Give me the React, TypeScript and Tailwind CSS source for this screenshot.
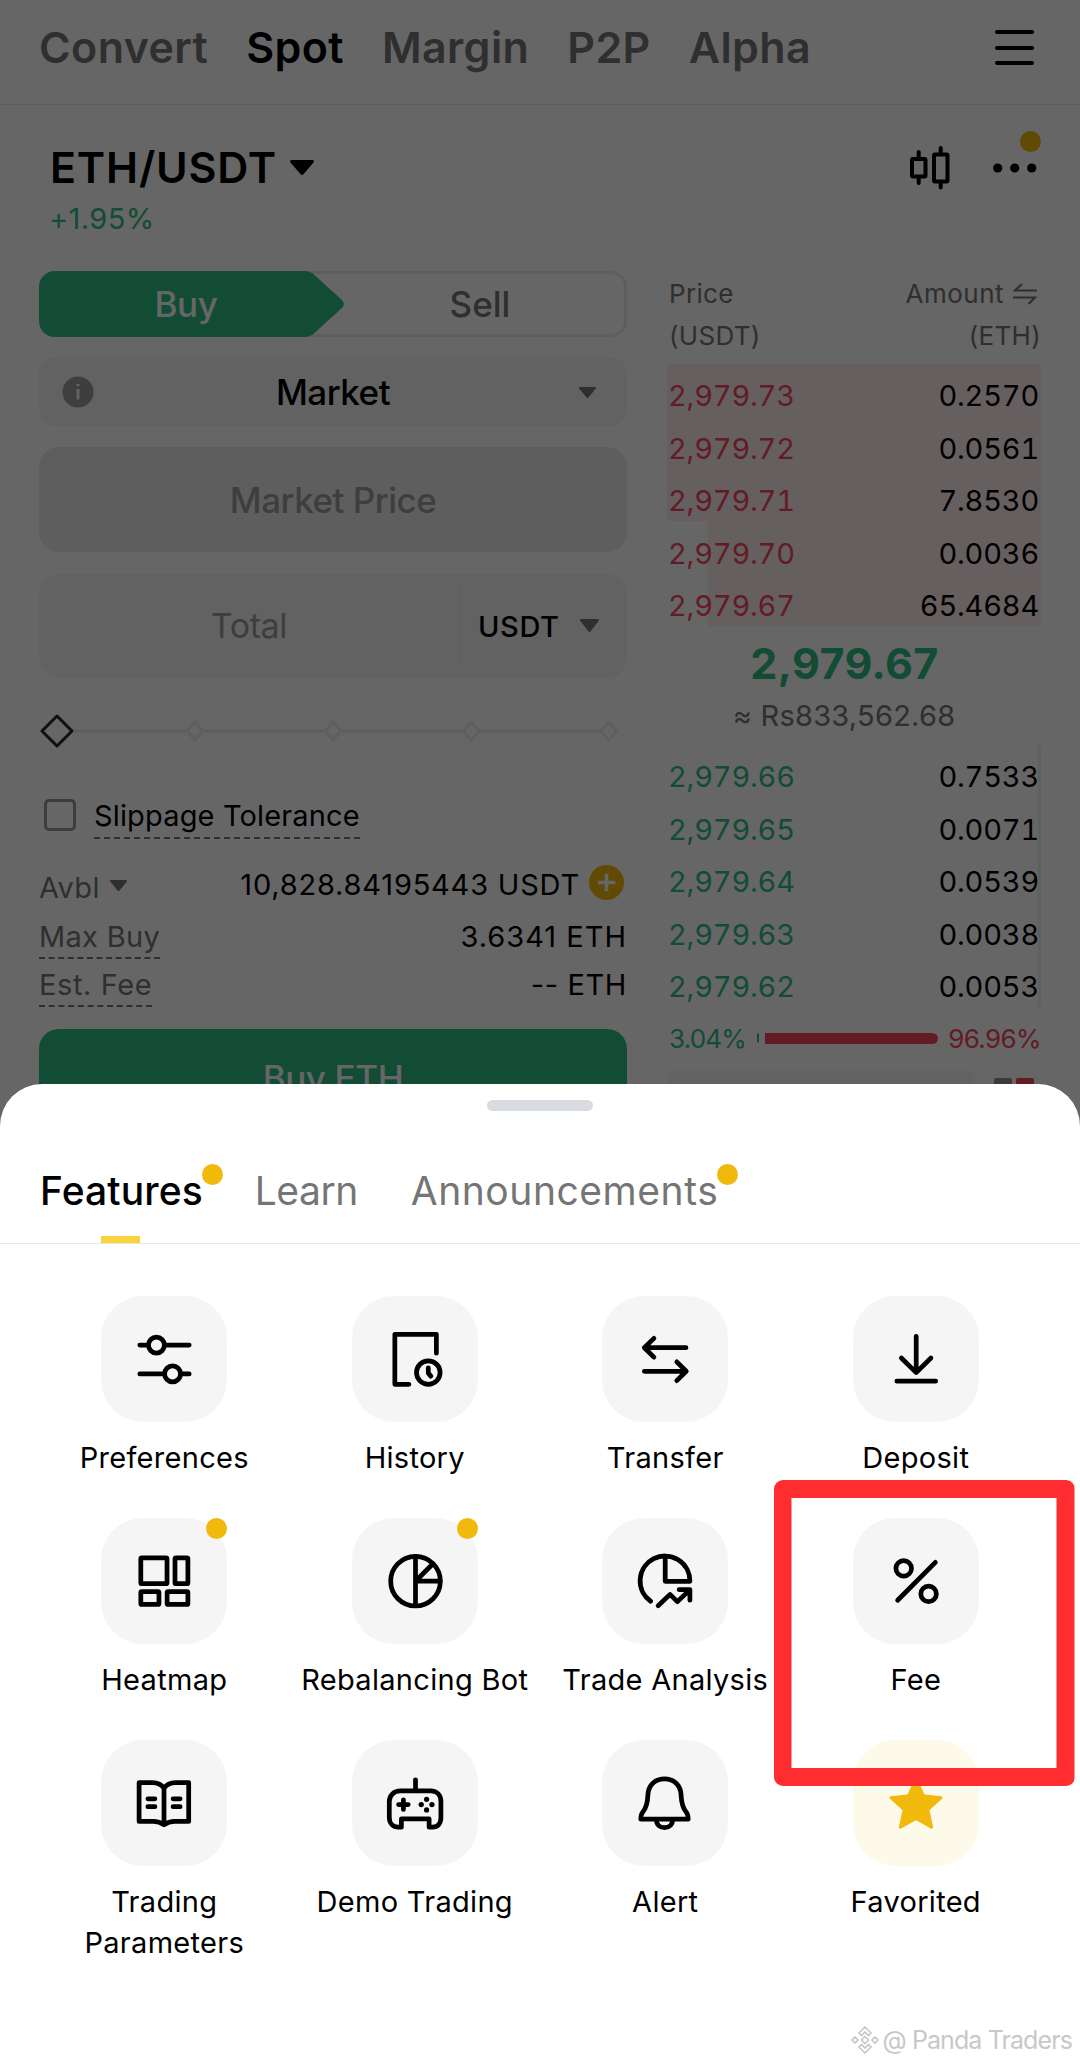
import type { ReactNode } from 'react'
import clsx from 'clsx'

const markets = ['Convert', 'Spot', 'Margin', 'P2P', 'Alpha']

const asks = [
  { price: '2,979.73', amount: '0.2570', depth: 'w-full' },
  { price: '2,979.72', amount: '0.0561', depth: 'w-full' },
  { price: '2,979.71', amount: '7.8530', depth: 'w-full' },
  { price: '2,979.70', amount: '0.0036', depth: 'w-[333px]' },
  { price: '2,979.67', amount: '65.4684', depth: 'w-[333px]' },
]

const bids = [
  { price: '2,979.66', amount: '0.7533', depth: 'w-[3px]' },
  { price: '2,979.65', amount: '0.0071', depth: 'w-[3px]' },
  { price: '2,979.64', amount: '0.0539', depth: 'w-[3px]' },
  { price: '2,979.63', amount: '0.0038', depth: 'w-[3px]' },
  { price: '2,979.62', amount: '0.0053', depth: 'w-[3px]' },
]

const features: { name: string; dot?: boolean; favorite?: boolean; marked?: boolean; icon: ReactNode }[] = [
  {
    name: 'Preferences',
    icon: (
      <>
        <path d="M38.5 48.7H47M63 48.7H87.5M38.5 77.3H63M79 77.3H87.5" />
        <circle cx="55" cy="48.7" r="7.9" />
        <circle cx="71" cy="77.3" r="7.9" />
      </>
    ),
  },
  {
    name: 'History',
    icon: (
      <>
        <path d="M83.7 56.8V38H42.5V87.6H56.5" />
        <circle cx="75.7" cy="76" r="11.7" />
        <path d="M75.7 71.3V76.5L78.2 79.5" />
      </>
    ),
  },
  {
    name: 'Transfer',
    icon: (
      <>
        <path d="M83.3 51.3H42M51.5 42L42 51.3L51.5 60.7" />
        <path d="M42 74.7H83.3M74.2 65.3L83.6 74.7L74.2 84" />
      </>
    ),
  },
  {
    name: 'Deposit',
    icon: <path d="M62.7 40V75.5M48 61.5L62.7 76L77.3 61.5M43.5 84.5H82" />,
  },
  {
    name: 'Heatmap',
    dot: true,
    icon: (
      <>
        <rect x="39.5" y="39.5" width="26" height="25.7" rx="1" />
        <rect x="73.4" y="39.5" width="12.8" height="25.7" rx="1" />
        <rect x="39.5" y="73" width="18" height="12.8" rx="1" />
        <rect x="65.6" y="73" width="20.6" height="12.8" rx="1" />
      </>
    ),
  },
  {
    name: 'Rebalancing Bot',
    dot: true,
    icon: (
      <>
        <circle cx="63" cy="62.7" r="24.6" />
        <path d="M63 38V87M63 62.7H87.5M63 62.7L80.3 45.4" />
      </>
    ),
  },
  {
    name: 'Trade Analysis',
    icon: (
      <>
        <path d="M48.3 82.6A24.7 24.7 0 1 1 87.2 62.8H62.7V38" />
        <path d="M55.7 87L67.5 75.8L74.7 83L86.5 71.8M76.5 71H87.2V81.5" />
      </>
    ),
  },
  {
    name: 'Fee',
    marked: true,
    icon: (
      <>
        <circle cx="50.3" cy="50" r="7.7" />
        <circle cx="75" cy="75.3" r="7.7" />
        <path d="M81.7 44L44.3 81.6" />
      </>
    ),
  },
  {
    name: 'Trading Parameters',
    icon: (
      <>
        <path d="M62.5 48C60 44 56 42.3 51 42.3H37.8V80.8H52C57 80.8 59.5 82 62.5 84C65.5 82 68 80.8 73 80.8H87V42.3H74C69 42.3 65 44 62.5 48ZM62.5 48V83" />
        <path d="M46.5 58.3H53.5M46.5 66.2H53.5M71.5 58.3H78.5M71.5 66.2H78.5" />
      </>
    ),
  },
  {
    name: 'Demo Trading',
    icon: (
      <>
        <path d="M63 39.5V50" />
        <path d="M48 50.5H78C84.5 50.5 88.2 55 88.2 61V77C88.2 83 85 86.5 80 86.5H76.5V78.3H49V86.5H46C41 86.5 37 83 37 77V61C37 55 41.5 50.5 48 50.5Z" />
        <path d="M51 59.3V68.9M46.2 64.1H55.8" />
        <g fill="black" stroke="none">
          <circle cx="74" cy="58.8" r="2.6" />
          <circle cx="74" cy="69.4" r="2.6" />
          <circle cx="68.7" cy="64.1" r="2.6" />
          <circle cx="79.3" cy="64.1" r="2.6" />
        </g>
      </>
    ),
  },
  {
    name: 'Alert',
    icon: (
      <>
        <path d="M62 38.5C51.5 38.5 46 46 45.6 54C45.2 63 43.5 68 40.5 71.5C38.8 73.5 38.5 75 38.5 78.5H85.5C85.5 75 85.2 73.5 83.5 71.5C80.5 68 78.8 63 78.4 54C78 46 72.5 38.5 62 38.5Z" />
        <path d="M54 79C54 84 57.5 87 62 87S70 84 70 79" />
      </>
    ),
  },
  {
    name: 'Favorited',
    favorite: true,
    icon: (
      <path
        fill="#F0B90B"
        stroke="#F0B90B"
        strokeWidth="3"
        d="M62.5 39L69.8 55.4L87.3 57.2L74.2 69L78 86.5L62.5 77.7L47 86.5L50.8 69L37.7 57.2L55.2 55.4Z"
      />
    ),
  },
]

function Caret({ className }: { className: string }) {
  return (
    <svg viewBox="0 0 24 16" className={className} fill="currentColor" preserveAspectRatio="none">
      <path d="M1.6 0H22.4C23.8 0 24.4 1.5 23.5 2.6L13.4 15.2C12.6 16.2 11.4 16.2 10.6 15.2L0.5 2.6C-0.4 1.5 0.2 0 1.6 0Z" />
    </svg>
  )
}

function Dot({ className }: { className?: string }) {
  return <span className={clsx('absolute size-[21px] rounded-full bg-[#F0B90B]', className)} />
}

function Header() {
  return (
    <header className="flex h-[105px] items-center justify-between border-b border-[#eaecef] pr-[46px] pb-[9px] pl-[39px]">
      <nav className="flex gap-[38px] text-[43px] leading-none font-semibold tracking-[0.4px]">
        {markets.map((name) => (
          <span key={name} className={name === 'Spot' ? 'text-black' : 'text-[#757575]'}>
            {name}
          </span>
        ))}
      </nav>
      <div className="flex flex-col gap-[11.5px]">
        <span className="h-1 w-[39px] rounded-full bg-black" />
        <span className="h-1 w-[39px] rounded-full bg-black" />
        <span className="h-1 w-[39px] rounded-full bg-black" />
      </div>
    </header>
  )
}

function PairTitle() {
  return (
    <div className="flex justify-between pt-[41px] pr-[43px] pl-[50px]">
      <div>
        <div className="flex h-[43px] items-center gap-[13px] text-[43px] leading-none font-semibold tracking-[0.8px]">
          ETH/USDT
          <Caret className="h-[15px] w-[24px]" />
        </div>
        <div className="mt-[15px] -ml-px text-[29px] leading-[30px] tracking-[0.4px] text-[#2EBD85]">+1.95%</div>
      </div>
      <div className="relative flex h-[44px] items-center gap-[43px]">
        <svg viewBox="0 0 40 44" className="h-[44px] w-[40px]" fill="none" stroke="black" strokeWidth="4" strokeLinecap="round">
          <rect x="2" y="13" width="13.5" height="17.5" rx="1" />
          <path d="M8.7 6V12M8.7 31V37" />
          <rect x="24" y="8.5" width="13.5" height="27" rx="1" />
          <path d="M30.7 2V8M30.7 36V41.5" />
        </svg>
        <svg viewBox="0 0 44 10" className="h-[10px] w-[44px]">
          <circle cx="4.7" cy="5" r="4.6" />
          <circle cx="21.7" cy="5" r="4.6" />
          <circle cx="38.7" cy="5" r="4.6" />
        </svg>
        <Dot className="-top-[15px] right-[-4px]" />
      </div>
    </div>
  )
}

function SideToggle() {
  return (
    <div className="relative flex h-[66px] rounded-[16px] border-[3px] border-[#eaecef] text-[35px] font-medium tracking-[-0.4px]">
      <svg viewBox="0 0 305 66" className="absolute -top-[3px] -left-[3px] h-[66px] w-[305px]">
        <path
          fill="#2EBD85"
          d="M16 0H265C270 0 273.5 1.5 276.5 5L302.5 28.5C305.5 31.5 305.5 34.5 302.5 37.5L276.5 61C273.5 64.5 270 66 265 66H16C7 66 0 59 0 50V16C0 7 7 0 16 0Z"
        />
      </svg>
      <div className="relative flex w-[288px] items-center justify-center text-white">Buy</div>
      <div className="flex flex-1 items-center justify-center pl-[6px] tracking-normal text-[#757575]">Sell</div>
    </div>
  )
}

function AmountSlider() {
  return (
    <div className="mt-[37px] flex h-[32px] items-center">
      <svg viewBox="0 0 587 34" className="h-[34px] w-[587px]" fill="none" stroke="#eaecef" strokeWidth="3" strokeLinejoin="round">
        <path d="M35 17H147M165 17H285M303 17H423M441 17H561" />
        <path d="M156 8L164 17L156 26L148 17ZM294 8L302 17L294 26L286 17ZM432 8L440 17L432 26L424 17ZM570 8L578 17L570 26L562 17Z" />
        <path stroke="#202630" d="M18 2L33 17L18 32L3 17Z" />
      </svg>
    </div>
  )
}

function OrderForm() {
  return (
    <div className="w-[588px]">
      <SideToggle />
      <div className="mt-[20px] flex h-[69px] items-center rounded-[16px] bg-[#f5f5f5] pr-[31px] pl-[23px] text-[#757575]">
        <svg viewBox="0 0 32 32" className="size-[32px]">
          <circle cx="16" cy="16" r="15.5" fill="#9c9c9c" />
          <path d="M16 13V23.5M16 8V10" stroke="#f5f5f5" strokeWidth="3" />
        </svg>
        <span className="flex-1 pt-px pr-[7px] text-center text-[35px] font-medium tracking-[-0.5px] text-black">Market</span>
        <Caret className="mt-[2px] h-[11px] w-[17px]" />
      </div>
      <div className="mt-[21px] flex h-[105px] items-center justify-center rounded-[20px] bg-[#ebebeb] pt-[2px] text-[35px] font-medium tracking-[-0.5px] text-[#9c9c9c]">
        Market Price
      </div>
      <div className="mt-[22px] flex h-[104px] items-center rounded-[20px] bg-[#f5f5f5]">
        <div className="flex-1 pb-[2px] text-center text-[34px] tracking-[-0.4px] text-[#9c9c9c]">Total</div>
        <div className="h-[76px] w-[2px] bg-[#eaecef]" />
        <div className="flex w-[166px] items-center justify-between pt-px pr-[28px] pl-[17px] text-[29px] font-medium tracking-[0.6px]">
          USDT
          <Caret className="mb-[2px] h-[13px] w-[19px] text-[#757575]" />
        </div>
      </div>
      <AmountSlider />
      <div className="mt-[52px] flex items-start gap-[18px] pl-[5px] text-[29px] tracking-[0.15px]">
        <span className="size-[32px] rounded-[5px] border-[3px] border-[#929aa5]" />
        <span className="border-b-2 border-dashed border-[#757575] pb-[4px] leading-[34px]">Slippage Tolerance</span>
      </div>
      <div className="mt-[28px] flex h-[34px] items-center text-[29px] leading-none">
        <span className="pt-[7px] tracking-[0.4px] text-[#757575]">Avbl</span>
        <Caret className="mt-[3px] ml-[10px] h-[11px] w-[17px] text-[#757575]" />
        <span className="mr-[9px] ml-auto tracking-[0.8px]">10,828.84195443 USDT</span>
        <svg viewBox="0 0 34 34" className="mr-[3px] mb-[3px] size-[35px]">
          <circle cx="17" cy="17" r="17" fill="#F0B90B" />
          <path d="M17 8.5V25.5M8.5 17H25.5" stroke="#fff" strokeWidth="3.5" />
        </svg>
      </div>
      <div className="mt-[19px] flex items-start justify-between text-[29px] leading-[34px]">
        <span className="border-b-2 border-dashed border-[#757575] pb-[3px] tracking-[0.3px] text-[#757575]">Max Buy</span>
        <span className="tracking-[1px]">3.6341 ETH</span>
      </div>
      <div className="mt-[9px] flex items-start justify-between text-[29px] leading-[34px]">
        <span className="border-b-2 border-dashed border-[#757575] pb-[3px] tracking-[0.6px] text-[#757575]">Est. Fee</span>
        <span className="tracking-[0.6px]">-- ETH</span>
      </div>
      <div className="mt-[22px] flex h-[99px] items-center justify-center rounded-[20px] bg-[#2EBD85] text-[35px] font-medium tracking-[-0.4px] text-white">
        Buy ETH
      </div>
    </div>
  )
}

function BookRows({ rows, side }: { rows: typeof asks; side: 'ask' | 'bid' }) {
  return (
    <div>
      {rows.map(({ price, amount, depth }) => (
        <div key={price} className="relative h-[52.4px]">
          <div className={clsx('absolute inset-y-0 right-0', depth, side === 'ask' ? 'bg-[#ffedef]' : 'bg-[#e6f5f0]')} />
          <div className="relative flex h-full items-center justify-between pt-[12px] pr-[2px] pl-[1px] text-[29px] tracking-[-0.2px] tabular-nums">
            <span className={side === 'ask' ? 'text-[#F6465D]' : 'text-[#2EBD85]'}>{price}</span>
            <span>{amount}</span>
          </div>
        </div>
      ))}
    </div>
  )
}

function OrderBook() {
  return (
    <div className="w-[374px]">
      <div className="flex justify-between pt-[2px] pl-[2px] text-[26px] leading-[42px] tracking-[0.3px] text-[#757575]">
        <div>
          Price
          <br />
          (USDT)
        </div>
        <div className="text-right">
          <div className="flex items-center gap-[9px] pr-[4px] tracking-[0.5px]">
            Amount
            <svg viewBox="0 0 24 22" className="h-[22px] w-[24px]" fill="none" stroke="currentColor" strokeWidth="2.2">
              <path d="M24 7.5H2L9 1M0 14.5H22L15.5 21" />
            </svg>
          </div>
          (ETH)
        </div>
      </div>
      <div className="mt-[7px]">
        <BookRows rows={asks} side="ask" />
      </div>
      <div className="mt-[13px] h-[49px] pr-[19px] text-center text-[43px] leading-[49px] font-bold tracking-[0.4px] text-[#2EBD85]">2,979.67</div>
      <div className="mt-[10px] mb-[11px] h-[36px] pr-[20px] text-center text-[29px] leading-[36px] tracking-[0.25px] text-[#757575]">≈ Rs833,562.68</div>
      <BookRows rows={bids} side="bid" />
      <div className="mt-[13px] flex h-[37px] items-center pl-[2px] text-[26px] tracking-[-0.8px]">
        <span className="w-[88px] text-[#2EBD85]">3.04%</span>
        <span className="h-[10px] w-[2px] rounded-l-full bg-[#2EBD85]" />
        <span className="ml-[6px] h-[11px] flex-1 rounded-r-full bg-[#F6465D]" />
        <span className="ml-[10px] tracking-[-0.6px] text-[#F6465D]">96.96%</span>
      </div>
      <div className="mt-[14px] flex items-start">
        <div className="h-[60px] w-[307px] rounded-[8px] bg-[#f5f5f5]" />
        <div className="mt-[7px] ml-[20px] h-[30px] w-[18px] rounded-[2px] bg-[#929292]" />
        <div className="mt-[7px] ml-[4px] h-[30px] w-[18px] rounded-[2px] bg-[#F6465D]" />
      </div>
    </div>
  )
}

function FeatureGrid() {
  return (
    <div className="mt-[52px] grid grid-cols-4 px-[39px]">
      {features.map(({ name, icon, dot, favorite, marked }) => (
        <div key={name} className="relative flex h-[222px] flex-col items-center">
          <div className={clsx('relative size-[126px] rounded-[42px]', favorite ? 'bg-[#FEFAE9]' : 'bg-[#f5f5f5]')}>
            <svg viewBox="0 0 125 125" className="size-full" fill="none" stroke="black" strokeWidth="4.7" strokeLinecap="round" strokeLinejoin="round">
              {icon}
            </svg>
            {dot && <Dot className="top-0 right-0" />}
          </div>
          <div className="mt-[15px] w-[236px] text-center text-[29px] leading-[41px] tracking-[0.3px]">{name}</div>
          {marked && (
            <div className="absolute -top-[38px] left-[-17px] z-10 h-[306px] w-[301px] rounded-[9px] bg-[#ff2d2f] [clip-path:polygon(evenodd,0_0,100%_0,100%_100%,0_100%,0_0,18px_18px,18px_288px,283px_288px,283px_18px,18px_18px)]" />
          )}
        </div>
      ))}
    </div>
  )
}

function MoreSheet() {
  return (
    <section className="absolute inset-x-0 top-[1084px] bottom-0 rounded-t-[42px] bg-white pt-[16px]">
      <div className="mx-auto h-[11px] w-[106px] rounded-full bg-[#d8dce1]" />
      <div className="flex h-[133px] border-b border-[#e6e6e6] pt-[58px] pl-[40px] text-[39px] leading-[44px] text-[#757575]">
        <div className="relative font-medium tracking-[0.1px] text-black">
          Features
          <Dot className="top-[-5px] right-[-20px]" />
          <span className="absolute top-[67px] left-[61px] h-[7px] w-[39px] bg-[#F8D33A]" />
        </div>
        <div className="ml-[52px] tracking-[-0.5px]">Learn</div>
        <div className="relative ml-[53px] tracking-[0.55px]">
          Announcements
          <Dot className="top-[-5px] right-[-20px]" />
        </div>
      </div>
      <FeatureGrid />
      <div className="absolute right-[8px] bottom-[8px] flex items-center gap-[4px] text-[25px] leading-[34px] tracking-[-0.9px] text-[#c8c8c8]">
        <svg viewBox="0 0 28 28" className="size-[28px]" fill="none" stroke="currentColor" strokeWidth="1.6">
          <path d="M14 1L20 7L17.5 9.5L14 6L10.5 9.5L8 7ZM14 27L20 21L17.5 18.5L14 22L10.5 18.5L8 21ZM4 11L7 14L4 17L1 14ZM24 11L27 14L24 17L21 14ZM14 10.5L17.5 14L14 17.5L10.5 14Z" />
        </svg>
        @ Panda Traders
      </div>
    </section>
  )
}

export default function App() {
  return (
    <main className="relative h-[2065px] w-[1080px] overflow-hidden bg-white font-['Inter',sans-serif] text-black">
      <Header />
      <PairTitle />
      <div className="mt-[37px] flex justify-between px-[39px]">
        <OrderForm />
        <OrderBook />
      </div>
      <div className="absolute inset-0 bg-black/60" />
      <MoreSheet />
    </main>
  )
}
